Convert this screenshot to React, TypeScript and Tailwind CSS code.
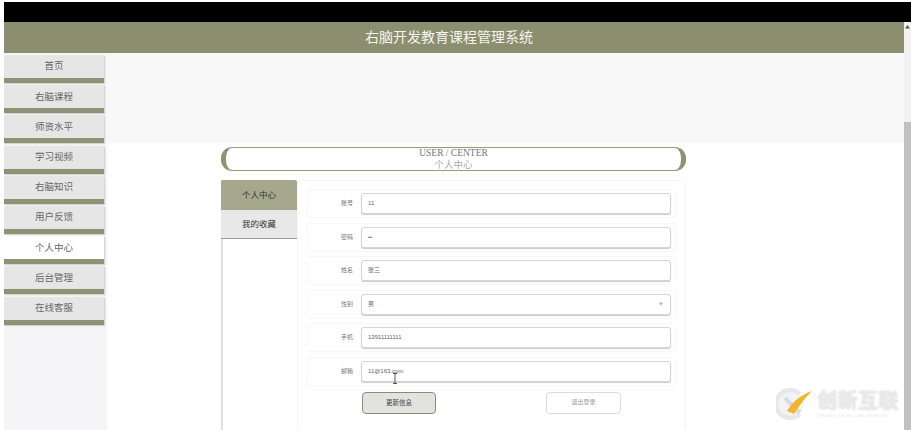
import React from "react";

const navItems = ["首页", "右脑课程", "师资水平", "学习视频", "右脑知识", "用户反馈", "个人中心", "后台管理", "在线客服"];

const fields = [
  { label: "账号", value: "11" },
  { label: "密码", value: "••" },
  { label: "姓名", value: "张三" },
  { label: "性别", value: "男", select: true },
  { label: "手机", value: "13911111111" },
  { label: "邮箱", value: "11@163.com" },
];

const App = () => {
  return (
    <div className="relative w-[911px] h-[430px] overflow-hidden bg-white pt-[2px] font-['Liberation_Sans','Noto_Sans_CJK_SC',sans-serif]">
      {/* top black strip */}
      <div className="h-[20px] ml-[4px] bg-black" />

      <div className="flex h-[408px]">
        <div className="w-[904px] pl-[4px] flex flex-col">
          {/* title bar */}
          <header className="h-[31px] shrink-0 bg-[#8b8f6f] flex items-center justify-center pr-[10px] text-[14px] text-[#f4f4ee]">
            右脑开发教育课程管理系统
          </header>

          <div className="flex flex-1 min-h-0">
            {/* left nav */}
            <nav className="w-[103px] shrink-0 bg-[#f5f5f8] pt-[2px] flex flex-col gap-[2.2px]">
              {navItems.map((name) => (
                <div
                  key={name}
                  className={`w-[100px] h-[28px] border-b-[5px] border-[#8f9375] flex items-center justify-center text-[9.5px] text-[#666] shadow-[1px_1px_1px_#d4d4d4] ${
                    name === "个人中心" ? "bg-white" : "bg-[#e6e6e6]"
                  }`}
                >
                  {name}
                </div>
              ))}
            </nav>

            <main className="flex-1 min-w-0 flex flex-col bg-white">
              {/* banner area */}
              <div className="h-[90px] shrink-0 bg-[#f8f8f9]" />

              <div className="w-[465px] ml-[114px] mt-[4px]">
                {/* section heading */}
                <div className="h-[24px] rounded-[11px] border-y border-[#989a80] border-l-[5px] border-r-[5px] border-x-[#8f9375] flex flex-col items-center justify-center leading-[12px] font-['Liberation_Serif','Noto_Sans_CJK_SC',serif] text-[9.5px] text-[#777]">
                  <span>USER / CENTER</span>
                  <span className="text-[#aaa]">个人中心</span>
                </div>

                <div className="flex mt-[9px]">
                  {/* side tabs */}
                  <div className="w-[76px] h-[251px] shrink-0 border-l-2 border-[#e2e2da]">
                    <div className="h-[30px] -ml-[2px] bg-[#a5a88c] rounded-t-[2px] flex items-center justify-center text-[8.5px] text-[#333]">
                      个人中心
                    </div>
                    <div className="h-[29px] -ml-[2px] bg-[#e8e8e8] border-b border-[#999] flex items-center justify-center text-[8.5px] text-[#333]">
                      我的收藏
                    </div>
                  </div>

                  {/* profile form */}
                  <div className="w-[389px] border border-[#f6f6f6] pl-[8px] pt-[8px] flex flex-col gap-[4.6px] h-[251px]">
                    {fields.map((f) => (
                      <div
                        key={f.label}
                        className="w-[370px] h-[29px] shrink-0 rounded-[3px] border border-[#f7f7f7] flex items-center"
                      >
                        <span className="w-[49px] pr-[3px] text-right text-[6px] text-[#777]">{f.label}</span>
                        <div className="w-[310px] h-[21px] ml-[5px] rounded-[3px] border border-[#d6d6d6] shadow-[0_1px_1px_#ccc] bg-white flex items-center justify-between px-[6px] text-[6px] text-[#666]">
                          <span>{f.value}</span>
                          {f.select && (
                            <svg width="6" height="4" viewBox="0 0 6 4">
                              <path d="M0.5 0.5 L3 3.5 L5.5 0.5 Z" fill="#bbb" />
                            </svg>
                          )}
                        </div>
                      </div>
                    ))}

                    <div className="flex mt-[1px] ml-[56px] gap-[110px]">
                      <button className="w-[74px] h-[22px] rounded-[4px] border border-[#8a8a7c] bg-[#e2e2de] text-[6.5px] text-[#444]">
                        更新信息
                      </button>
                      <button className="w-[75px] h-[22px] rounded-[4px] border border-[#dcdcdc] bg-white text-[6px] text-[#999]">
                        退出登录
                      </button>
                    </div>
                  </div>
                </div>
              </div>
            </main>
          </div>
        </div>

        {/* browser scrollbar */}
        <div className="w-[7px] shrink-0 bg-[#f1f1f1] flex flex-col">
          <svg width="7" height="8" viewBox="0 0 7 8" className="mt-[1px] shrink-0">
            <path d="M3.5 2 L6 5.5 H1 Z" fill="#555" />
          </svg>
          <div className="mt-[91px] flex-1 bg-[#c1c1c1]" />
        </div>
      </div>

      {/* text cursor over the email field */}
      <svg width="6" height="11" viewBox="0 0 6 11" className="absolute left-[392px] top-[373px]">
        <path d="M1 0.5 H5 M3 0.5 V10.5 M1 10.5 H5" stroke="#555" strokeWidth="1" fill="none" />
      </svg>

      {/* watermark */}
      <div className="absolute left-[776px] top-[388px] flex items-start gap-[5px]">
        <svg width="36" height="32" viewBox="0 0 36 32">
          <circle cx="15" cy="16" r="12.5" fill="#f2f3f5" />
          <path d="M24 6 A14 14 0 1 0 24 26" fill="none" stroke="#e8e8e8" strokeWidth="4.5" />
          <path d="M9 10 L24 25" stroke="#d6dbe4" strokeWidth="4" />
          <path d="M11 23 C17 13 25 7 36 3 C30 9 24 16 18 26 Z" fill="#f4b52e" />
        </svg>
        <div className="flex flex-col items-start">
          <span className="text-[20px] leading-[26px] tracking-[0.5px] text-[#e9e9e9] font-bold [text-shadow:0_0_3px_#ddd] whitespace-nowrap">
            创新互联
          </span>
          <span className="text-[3.5px] leading-[4px] tracking-[0.6px] text-[#e4e4e4] whitespace-nowrap">
            CHUANG XIN HU LIAN NETWORK
          </span>
        </div>
      </div>
    </div>
  );
};

export default App;
